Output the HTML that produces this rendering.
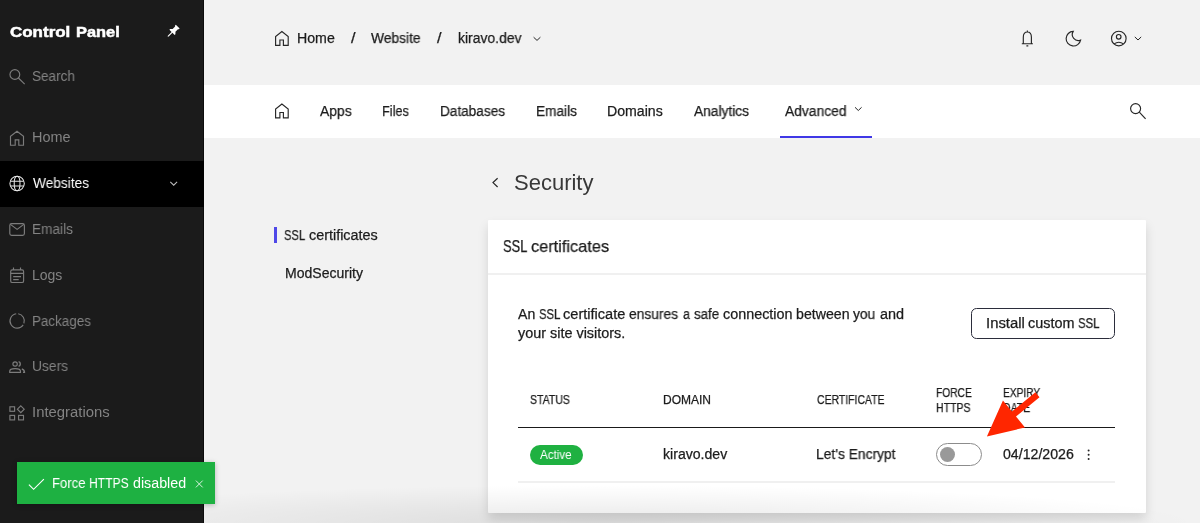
<!DOCTYPE html>
<html>
<head>
<meta charset="utf-8">
<style>
*{box-sizing:border-box;margin:0;padding:0}
html,body{width:1200px;height:523px;overflow:hidden;background:#f2f2f2;font-family:"Liberation Sans",sans-serif;color:#1c1c1c}
.t{position:absolute;white-space:nowrap;line-height:1;font-size:14px;transform-origin:0 0;will-change:transform;-webkit-text-stroke:.25px currentColor}
.b{position:absolute}
svg{position:absolute;left:0;top:0;overflow:visible}
#side{position:absolute;left:0;top:0;width:204px;height:523px;background:#1b1b1b;border-right:1px solid #0c0c0c}
.g{color:#838383;-webkit-text-stroke:0}
.h{font-size:12px}
#nav{position:absolute;left:204px;top:85px;width:996px;height:53px;background:#fff}
#card{position:absolute;left:488px;top:220px;width:657.5px;height:293px;background:#fff;border-radius:1px;box-shadow:0 6px 11px rgba(0,0,0,.13)}
</style>
</head>
<body>
<div id="side"></div>
<div class="b" style="left:0;top:161px;width:204px;height:45.5px;background:#000"></div>
<div id="nav"></div>
<div id="card"></div>

<!-- sidebar text -->
<div class="t" id="cp_0" style="transform:scaleX(1.131);left:10.3px;top:24px;font-size:15px;font-weight:bold;color:#fff;-webkit-text-stroke:.5px #fff">Control</div>
<div class="t" id="cp_1" style="transform:scaleX(1.095);left:76px;top:24px;font-size:15px;font-weight:bold;color:#fff;-webkit-text-stroke:.5px #fff">Panel</div>
<div class="t g" id="s_search" style="transform:scaleX(0.968);left:32.0px;top:69.0px">Search</div>
<div class="t g" id="s_home" style="transform:scaleX(1.031);left:32.0px;top:130.0px">Home</div>
<div class="t" id="s_web" style="-webkit-text-stroke:0;transform:scaleX(0.978);left:33.0px;top:176.0px;color:#fff">Websites</div>
<div class="t g" id="s_em" style="transform:scaleX(0.975);left:32.0px;top:222.0px">Emails</div>
<div class="t g" id="s_logs" style="transform:scaleX(0.986);left:32.0px;top:268.0px">Logs</div>
<div class="t g" id="s_pk" style="transform:scaleX(0.958);left:32.0px;top:314.0px">Packages</div>
<div class="t g" id="s_us" style="transform:scaleX(0.986);left:32.0px;top:359.0px">Users</div>
<div class="t g" id="s_int" style="transform:scaleX(1.062);left:32.0px;top:405.0px">Integrations</div>

<!-- breadcrumb -->
<div class="t" id="b_home" style="transform:scaleX(1.012);left:297.0px;top:31.0px">Home</div>
<div class="t" id="b_s1" style="transform:scaleX(1.159);left:351.0px;top:31.0px">/</div>
<div class="t" id="b_web" style="transform:scaleX(0.985);left:371.0px;top:31.0px">Website</div>
<div class="t" id="b_s2" style="transform:scaleX(1.159);left:437.0px;top:31.0px">/</div>
<div class="t" id="b_dom" style="transform:scaleX(0.996);left:458px;top:31px">kiravo.dev</div>

<!-- nav -->
<div class="t" id="n_apps" style="transform:scaleX(0.992);left:320px;top:104px">Apps</div>
<div class="t" id="n_files" style="transform:scaleX(0.911);left:382px;top:104px">Files</div>
<div class="t" id="n_db" style="transform:scaleX(0.971);left:440px;top:104px">Databases</div>
<div class="t" id="n_em" style="transform:scaleX(0.975);left:536px;top:104px">Emails</div>
<div class="t" id="n_dom" style="transform:scaleX(1.010);left:607px;top:104px">Domains</div>
<div class="t" id="n_an" style="transform:scaleX(0.982);left:694px;top:104px">Analytics</div>
<div class="t" id="n_adv" style="transform:scaleX(0.988);left:785px;top:104px">Advanced</div>
<div class="b" style="left:779.5px;top:136px;width:92px;height:2px;background:#4038e6"></div>

<!-- subnav -->
<div class="b" style="left:274px;top:227.4px;width:3px;height:15.4px;background:#4f48e8"></div>
<div class="t" id="sn_ssl_0" style="transform:scaleX(0.796);left:284px;top:228px">SSL</div>
<div class="t" id="sn_ssl_1" style="transform:scaleX(1.027);left:309px;top:228px">certificates</div>
<div class="t" id="sn_mod" style="transform:scaleX(1.003);left:285.0px;top:266.0px">ModSecurity</div>

<!-- title -->
<div class="t" id="title" style="-webkit-text-stroke:0;transform:scaleX(0.994);left:514px;top:172px;font-size:22px;color:#383838">Security</div>

<!-- card -->
<div class="t" id="c_head_0" style="transform:scaleX(0.758);left:503.0px;top:238.0px;font-size:17px">SSL</div>
<div class="t" id="c_head_1" style="transform:scaleX(0.962);left:531.0px;top:238.0px;font-size:17px">certificates</div>
<div class="b" style="left:488px;top:273px;width:657.5px;height:2px;background:#f0f0f0"></div>
<div class="t" id="d1_0" style="transform:scaleX(1.007);left:518.0px;top:307.0px">An</div>
<div class="t" id="d1_1" style="transform:scaleX(0.804);left:539.0px;top:307.0px">SSL</div>
<div class="t" id="d1_2" style="transform:scaleX(1.041);left:563.0px;top:307.0px">certificate</div>
<div class="t" id="d1_3" style="transform:scaleX(0.986);left:629.0px;top:307.0px">ensures</div>
<div class="t" id="d1_4" style="transform:scaleX(0.890);left:683.0px;top:307.0px">a</div>
<div class="t" id="d1_5" style="transform:scaleX(0.948);left:694.0px;top:307.0px">safe</div>
<div class="t" id="d1_6" style="transform:scaleX(1.026);left:723.0px;top:307.0px">connection</div>
<div class="t" id="d1_7" style="transform:scaleX(1.012);left:796.0px;top:307.0px">between</div>
<div class="t" id="d1_8" style="transform:scaleX(0.982);left:853.0px;top:307.0px">you</div>
<div class="t" id="d1_9" style="transform:scaleX(1.032);left:880.0px;top:307.0px">and</div>
<div class="t" id="d2" style="transform:scaleX(1.029);left:518px;top:326px">your site visitors.</div>
<div class="b" style="left:971px;top:308px;width:144px;height:31px;border:1px solid #2b2d3b;border-radius:5.5px"></div>
<div class="t" id="btn_0" style="transform:scaleX(1.062);left:986.0px;top:316.0px">Install</div>
<div class="t" id="btn_1" style="transform:scaleX(1.029);left:1028.0px;top:316.0px">custom</div>
<div class="t" id="btn_2" style="transform:scaleX(0.812);left:1078.0px;top:316.0px">SSL</div>

<div class="t h" id="h_st" style="transform:scaleX(0.876);left:530px;top:394px">STATUS</div>
<div class="t h" id="h_dom" style="transform:scaleX(1.001);left:663.0px;top:394.0px">DOMAIN</div>
<div class="t h" id="h_cert" style="transform:scaleX(0.871);left:817px;top:394px">CERTIFICATE</div>
<div class="t h" id="h_f1" style="transform:scaleX(0.852);left:936.0px;top:387.0px">FORCE</div>
<div class="t h" id="h_f2" style="transform:scaleX(0.879);left:936.0px;top:402.0px">HTTPS</div>
<div class="t h" id="h_e1" style="transform:scaleX(0.849);left:1003.0px;top:387.0px">EXPIRY</div>
<div class="t h" id="h_e2" style="transform:scaleX(0.878);left:1003px;top:402px">DATE</div>
<div class="b" style="left:518px;top:427px;width:597px;height:1px;background:#1a1a1a"></div>

<div class="b" style="left:529.5px;top:445.3px;width:53.5px;height:19.3px;border-radius:10px;background:#1fb141"></div>
<div class="t" id="r_act" style="-webkit-text-stroke:0;transform:scaleX(0.969);left:540.0px;top:449.0px;font-size:12px;color:#fff">Active</div>
<div class="t" id="r_dom" style="transform:scaleX(1.007);left:663px;top:447px">kiravo.dev</div>
<div class="t" id="r_le" style="transform:scaleX(0.989);left:816.0px;top:447.0px">Let's Encrypt</div>
<div class="b" style="left:935.8px;top:443px;width:46px;height:23px;border-radius:12px;border:1px solid #8c8c8c;background:#fff"></div>
<div class="b" style="left:939.7px;top:447px;width:15.2px;height:15.2px;border-radius:8px;background:#999"></div>
<div class="t" id="r_date" style="transform:scaleX(1.011);left:1003.0px;top:447.0px">04/12/2026</div>
<div class="b" style="left:518px;top:481px;width:597px;height:2px;background:#f0f0f0"></div>

<!-- bottom scroll shadow -->
<div class="b" style="left:204px;top:485px;width:996px;height:38px;overflow:hidden"><div class="b" style="left:-204px;top:0;width:1200px;height:38px;background:radial-gradient(farthest-side at 50% 100%,rgba(0,0,0,.09),rgba(0,0,0,0))"></div></div>

<!-- toast -->
<div class="b" style="left:17px;top:462.1px;width:197.6px;height:42.3px;background:#1eb142;box-shadow:0 1px 5px rgba(0,0,0,.25)"></div>
<div class="t" id="toast_0" style="-webkit-text-stroke:0;transform:scaleX(0.937);left:52.0px;top:476.0px;color:#fff">Force</div>
<div class="t" id="toast_1" style="-webkit-text-stroke:0;transform:scaleX(0.866);left:89.0px;top:476.0px;color:#fff">HTTPS</div>
<div class="t" id="toast_2" style="-webkit-text-stroke:0;transform:scaleX(1.019);left:133.0px;top:476.0px;color:#fff">disabled</div>

<!-- ICONS -->
<svg width="1200" height="523" fill="none" stroke-linecap="butt" stroke-linejoin="miter">
 <!-- sidebar icons (grey) -->
 <g stroke="#7c7c7c" stroke-width="1.15">
  <circle cx="14.85" cy="74.5" r="4.9"/><path d="M18.4 78 L24.7 84.1"/>
  <path id="house" d="M10.5 145.2 V136.3 L17 131.2 L23.5 136.3 V145.2 H18.8 V139.8 H15.2 V145.2 Z"/>
  <rect x="9.8" y="223.6" width="14.6" height="11.7" rx="1.8"/><path d="M10.4 224.4 L17.1 229.4 L23.8 224.4"/>
  <rect x="10.7" y="269.9" width="12.9" height="12.6" rx="1.6"/><path d="M13.5 267.4 V270 M20.5 267.4 V270 M10.7 273.4 H23.6 M13.2 276.6 H21 M13.2 279.6 H18.7"/>
  <path d="M18.2 313.8 A7.2 7.2 0 0 1 23.9 323.4 M23.2 324.9 A7.2 7.2 0 1 1 16.2 313.8"/>
  <circle cx="15.1" cy="364" r="2.2"/>
  <path d="M9.7 372.3 V371.2 Q9.7 368.6 15.1 368.6 Q20.5 368.6 20.5 371.2 V372.3 Z"/>
  <path d="M18.6 361.7 A2.4 2.4 0 0 1 18.6 366.3" stroke-width="1.4"/>
  <path d="M21.8 368.8 Q24.5 369.8 24.5 372.3 H23" stroke-width="1.3"/>
  <rect x="9.9" y="406.8" width="4.7" height="4.5"/><rect x="9.9" y="415.4" width="4.7" height="4.5"/><rect x="18.6" y="415.4" width="4.9" height="4.5"/>
  <path d="M20.8 405.8 L24.2 409.2 L20.8 412.6 L17.4 409.2 Z"/>
 </g>
 <!-- globe + chevron (white) -->
 <g stroke="#e6e6e6" stroke-width="1.05">
  <circle cx="17.1" cy="183.5" r="7.2"/><ellipse cx="17.1" cy="183.5" rx="2.9" ry="7.2"/>
  <path d="M10.4 181.2 H23.8 M10.4 186 H23.8"/>
  <path d="M170.3 181.9 L173.7 185.2 L177.1 181.9" stroke="#bdbdbd"/>
 </g>
 <!-- pin -->
 <g transform="translate(172.5,31.9) rotate(45)" fill="#fff" stroke="none">
  <path d="M-2.7 -7.4 H2.7 V-6.3 L2 -5.7 V-2.2 L3.7 -0.4 V0.7 H0.6 V6 L0 6.8 L-0.6 6 V0.7 H-3.7 V-0.4 L-2 -2.2 V-5.7 L-2.7 -6.3 Z"/>
 </g>
 <!-- dark icons -->
 <g stroke="#262626" stroke-width="1.15">
  <path d="M275.6 45.3 V36.5 L281.9 31.6 L288.2 36.5 V45.3 H283.4 V40 H279.9 V45.3 Z"/>
  <path d="M275.6 117.8 V109 L281.9 104.1 L288.2 109 V117.8 H283.4 V112.5 H279.9 V117.8 Z"/>
  <path d="M533.6 37.2 L537 40.4 L540.4 37.2" stroke-width="1"/>
  <path d="M855 107.3 L858.3 110.5 L861.6 107.3" stroke-width="1"/>
  <path d="M1134.8 36.9 L1138 40 L1141.2 36.9" stroke-width="1"/>
  <path d="M497.6 178.2 L493 182.6 L497.6 187" stroke-width="1.2"/>
  <!-- bell -->
  <path d="M1021.8 43.7 H1032.9 M1023.3 43.7 V37.2 Q1023.3 32 1027.35 32 Q1031.4 32 1031.4 37.2 V43.7 M1027.35 30.6 V32 M1026.4 45.8 H1028.3"/>
  <!-- moon -->
  <path d="M1073.2 31.4 A7.3 7.3 0 1 0 1080.6 40.1 A6 6 0 0 1 1073.2 31.4 Z"/>
  <!-- user -->
  <circle cx="1118.8" cy="38.5" r="7.3"/><circle cx="1118.7" cy="36.8" r="2.3"/>
  <path d="M1114.1 43.9 Q1118.8 40.6 1123.5 43.9"/>
  <!-- nav search -->
  <circle cx="1135.6" cy="108.6" r="5"/><path d="M1139.3 112.2 L1145.6 118.8"/>
 </g>
 <!-- 3 dots -->
 <g fill="#262626"><circle cx="1088.6" cy="450.6" r="1"/><circle cx="1088.6" cy="454.8" r="1"/><circle cx="1088.6" cy="459" r="1"/></g>
 <!-- toast icons -->
 <g stroke="#fff" stroke-width="1.15">
  <path d="M28.9 484.6 L33.6 489.3 L43.9 479.1"/>
  <path d="M195.9 480.6 L202.7 487.4 M202.7 480.6 L195.9 487.4" stroke-width="1" stroke="#d9f2df"/>
 </g>
 <!-- arrow -->
 <path d="M986.9 436.4 L1002.95 400.5 L1011.96 411.5 L1035.45 392.37 L1039.5 397.33 L1016 416.5 L1025 427.5 Z" fill="#ff2600"/>
</svg>
</body>
</html>
